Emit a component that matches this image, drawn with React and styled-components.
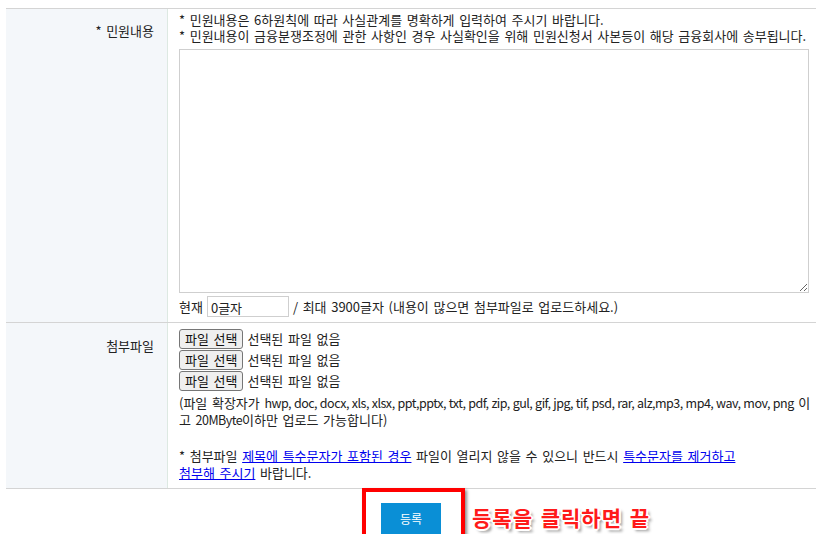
import React from "react";
import styled, { createGlobalStyle } from "styled-components";

const Global = createGlobalStyle`
  html, body { margin: 0; padding: 0; background: #fff; }
  body {
    font-family: "Noto Sans CJK KR", "Noto Sans", sans-serif;
    font-size: 13px;
    word-spacing: 1.7px;
    color: #222;
  }
`;

const Page = styled.div`
  padding: 8px 20px 0 6px;
  width: 810px;
`;

const Table = styled.div`
  border-top: 1px solid #d4d4d4;
`;

const Row = styled.div`
  display: grid;
  grid-template-columns: 162px 1fr;
  border-bottom: 1px solid #d4d4d4;
`;

const Label = styled.div`
  background: #f4f7fa;
  border-right: 1px solid #dde9e2;
  text-align: right;
  padding: ${(p) => p.$top}px 13px 0 0;
  line-height: 17px;
`;

const Cell = styled.div`
  padding: ${(p) => p.$pt}px 0 ${(p) => p.$pb}px 11px;
  line-height: 16px;
`;

const Line = styled.div`
  white-space: nowrap;
  line-height: ${(p) => p.$lh || 16}px;
  min-height: ${(p) => p.$lh || 16}px;
`;

const Lat = styled.span`
  font-size: 12.5px;
  letter-spacing: -0.5px;
  word-spacing: 0.5px;
`;

const TextArea = styled.textarea`
  display: block;
  box-sizing: border-box;
  width: 630px;
  height: 244px;
  margin: 5px 0 3px;
  border: 1px solid #cfcfcf;
  resize: both;
  font: inherit;
`;

const CountRow = styled.div`
  display: flex;
  align-items: center;
  gap: 4px;
  white-space: nowrap;
`;

const CountInput = styled.input`
  box-sizing: border-box;
  width: 82px;
  height: 21px;
  border: 1px solid #cfcfcf;
  padding: 2px 3px 0;
  font: inherit;
  color: #222;
`;

const FileRow = styled.div`
  display: flex;
  align-items: center;
  gap: 4px;
  height: 21px;
  white-space: nowrap;
`;

const FileButton = styled.button`
  box-sizing: border-box;
  height: 20px;
  padding: 0 5px;
  font: inherit;
  font-size: 13px;
  line-height: 16px;
  color: #111;
  background: #efefef;
  border: 1px solid #767676;
  border-radius: 3px;
  word-spacing: 1.7px;
`;

const Notes = styled.div`
  margin-top: 3px;
`;

const Link = styled.a`
  color: #0000ee;
  text-decoration: underline;
  cursor: pointer;
`;

const Footer = styled.div`
  display: flex;
  justify-content: center;
  padding-top: 14px;
`;

const ButtonWrap = styled.div`
  position: relative;
`;

const Submit = styled.button`
  width: 60px;
  height: 31px;
  border: 0;
  background: #0a8fd6;
  color: #fff;
  font: inherit;
  font-size: 12px;
  padding: 0;
`;

const RedBox = styled.div`
  position: absolute;
  left: -19px;
  top: -15px;
  width: 103px;
  height: 52px;
  box-sizing: border-box;
  border: 4px solid #ff0000;
  box-shadow: 2px 2px 3px rgba(0, 0, 0, 0.45);
  pointer-events: none;
`;

const RedText = styled.div`
  position: absolute;
  left: 91px;
  top: -1px;
  white-space: nowrap;
  font-size: 21px;
  letter-spacing: 1px;
  word-spacing: 2px;
  font-weight: 700;
  color: #ff1a1a;
  text-shadow:
    -1px -1px 0 #fff, 1px -1px 0 #fff, -1px 1px 0 #fff, 1px 1px 0 #fff,
    0 -2px 0 #fff, 0 2px 0 #fff, -2px 0 0 #fff, 2px 0 0 #fff,
    3px 3px 3px rgba(0, 0, 0, 0.45);
`;

export default function App() {
  return (
    <Page>
      <Global />
      <Table>
        <Row>
          <Label $top={13}>* 민원내용</Label>
          <Cell $pt={3} $pb={5}>
            <Line>* 민원내용은 6하원칙에 따라 사실관계를 명확하게 입력하여 주시기 바랍니다.</Line>
            <Line>* 민원내용이 금융분쟁조정에 관한 사항인 경우 사실확인을 위해 민원신청서 사본등이 해당 금융회사에 송부됩니다.</Line>
            <TextArea />
            <CountRow>
              현재 <CountInput readOnly value="0글자" /> / 최대 3900글자 (내용이 많으면 첨부파일로 업로드하세요.)
            </CountRow>
          </Cell>
        </Row>
        <Row>
          <Label $top={14}>첨부파일</Label>
          <Cell $pt={5} $pb={7}>
            {[0, 1, 2].map((i) => (
              <FileRow key={i}>
                <FileButton type="button">파일 선택</FileButton>
                <span>선택된 파일 없음</span>
              </FileRow>
            ))}
            <Notes>
              <Line $lh={17}>
                (파일 확장자가 <Lat>hwp, doc, docx, xls, xlsx, ppt,pptx, txt, pdf, zip, gul, gif, jpg, tif, psd, rar, alz,mp3, mp4, wav, mov, png</Lat> 이
              </Line>
              <Line $lh={17}>
                고 <Lat>20MByte</Lat>이하만 업로드 가능합니다)
              </Line>
              <Line $lh={19} />
              <Line $lh={17}>
                * 첨부파일 <Link>제목에 특수문자가 포함된 경우</Link> 파일이 열리지 않을 수 있으니 반드시 <Link>특수문자를 제거하고 </Link>
              </Line>
              <Line $lh={17}>
                <Link>첨부해 주시기</Link> 바랍니다.
              </Line>
            </Notes>
          </Cell>
        </Row>
      </Table>
      <Footer>
        <ButtonWrap>
          <Submit type="button">등록</Submit>
          <RedBox />
          <RedText>등록을 클릭하면 끝</RedText>
        </ButtonWrap>
      </Footer>
    </Page>
  );
}
